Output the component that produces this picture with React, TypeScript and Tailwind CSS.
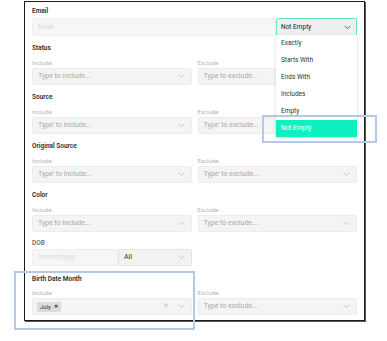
import React from "react";

const Chevron = ({ color = "#c4c4c4" }: { color?: string }) => (
  <svg width="7" height="5" viewBox="0 0 7 5" fill="none">
    <path d="M1 1.2L3.5 3.6L6 1.2" stroke={color} strokeWidth="0.9" strokeLinecap="round" strokeLinejoin="round" />
  </svg>
);

const SelectBox = ({ placeholder, children }: { placeholder?: string; children?: React.ReactNode }) => (
  <div className="h-[17px] flex items-center justify-between rounded-[2px] border border-[#ececec] bg-[#f4f4f4] pl-[5px] pr-[6px]">
    {children ?? <span className="text-[7px] text-[#a9a9a9] leading-none">{placeholder}</span>}
    <Chevron />
  </div>
);

const Field = ({ label, placeholder }: { label: string; placeholder: string }) => (
  <div className="flex flex-col">
    <div className="h-[9px] text-[6px] leading-[9px] text-[#b4b4b4]">{label}</div>
    <div className="mt-[1px]">
      <SelectBox placeholder={placeholder} />
    </div>
  </div>
);

const Section = ({ title, inc, exc }: { title: string; inc: string; exc: string }) => (
  <div className="mt-[7px]">
    <div className="h-[10px] text-[6.5px] leading-[10px] font-semibold text-[#2b2b2b]">{title}</div>
    <div className="mt-[5px] grid grid-cols-2 gap-x-[6px]">
      <Field label="Include:" placeholder={inc} />
      <Field label="Exclude:" placeholder={exc} />
    </div>
  </div>
);

const items = ["Exactly", "Starts With", "Ends With", "Includes", "Empty", "Not Empty"];

export default function App() {
  return (
    <div className="relative w-[387px] h-[341px] bg-white overflow-hidden" style={{ fontFamily: "Roboto, 'Liberation Sans', sans-serif" }}>
      <div className="ml-[24px] mt-[1px] w-[341px] h-[320px] border border-[#1c1c1c] shadow-[1px_1px_0_#555] px-[7px] pt-[4px]">
        {/* Email */}
        <div className="h-[10px] text-[6.5px] leading-[10px] font-semibold text-[#2b2b2b]">Email</div>
        <div className="mt-[2px] h-[18px] flex">
          <div className="flex-1 flex items-center rounded-l-[2px] border border-[#efefef] bg-[#f6f6f6] pl-[5px]">
            <span className="text-[6.5px] text-[#d6d6d6] leading-none">Email</span>
          </div>
          <div className="w-[81px] flex items-center justify-between border border-[#5fe9c5] bg-[#efefef] pl-[4px] pr-[5px] rounded-[2px]">
            <span className="text-[6.5px] text-[#222] leading-none">Not Empty</span>
            <Chevron color="#555" />
          </div>
        </div>

        <Section title="Status" inc="Type to include..." exc="Type to exclude..." />
        <Section title="Source" inc="Type' to include..." exc="Type' to exclude..." />
        <Section title="Original Source" inc="Type' to include..." exc="Type' to exclude..." />
        <Section title="Color" inc="Type to include..." exc="Type to exclude..." />

        {/* DOB */}
        <div className="mt-[6px]">
          <div className="h-[10px] text-[6.5px] leading-[10px] font-medium text-[#666]">DOB</div>
          <div className="mt-[1px] grid grid-cols-2 gap-x-[6px]">
            <div className="flex h-[17px]">
              <div className="w-[86px] flex items-center rounded-l-[2px] border border-[#efefef] bg-[#f6f6f6] pl-[6px]">
                <span className="text-[6.5px] text-[#d8d8d8] leading-none">mm/dd/yyyy</span>
              </div>
              <div className="flex-1 flex items-center justify-between rounded-r-[2px] border border-[#e6e6e6] bg-[#f2f2f2] pl-[5px] pr-[6px]">
                <span className="text-[7px] text-[#333] leading-none">All</span>
                <Chevron />
              </div>
            </div>
            <div />
          </div>
        </div>

        {/* Birth Date Month */}
        <div className="mt-[8px]">
          <div className="h-[10px] text-[6.5px] leading-[10px] font-semibold text-[#2b2b2b]">Birth Date Month</div>
          <div className="mt-[4px] grid grid-cols-2 gap-x-[6px]">
            <div className="flex flex-col">
              <div className="h-[9px] text-[6px] leading-[9px] text-[#b4b4b4]">Include:</div>
              <div className="mt-[1px] h-[17px] flex items-center justify-between rounded-[2px] border border-[#ececec] bg-[#f4f4f4] pl-[4px] pr-[6px]">
                <span className="flex items-center gap-[3px] h-[10px] rounded-[1px] bg-[#dcdcdc] px-[3px] text-[6px] leading-none text-[#333]">
                  July <span className="text-[5px] text-[#555]">✖</span>
                </span>
                <div className="flex items-center gap-[9px]">
                  <span className="text-[7px] leading-none text-[#c8c8c8]">✕</span>
                  <Chevron />
                </div>
              </div>
            </div>
            <Field label="Exclude:" placeholder="Type to exclude..." />
          </div>
        </div>
      </div>

      {/* Dropdown menu */}
      <div className="absolute left-[276px] top-[35px] w-[81px] bg-white shadow-[0_1px_3px_rgba(0,0,0,0.18)] flex flex-col">
        {items.map((it, i) => (
          <div
            key={it}
            className={
              i === items.length - 1
                ? "h-[17px] flex items-center pl-[5px] text-[6.5px] text-white bg-[#0ff0c0]"
                : "h-[17px] flex items-center pl-[5px] text-[6.5px] text-[#333]"
            }
          >
            {it}
          </div>
        ))}
      </div>

      {/* Highlight rectangles */}
      <div className="absolute left-[262px] top-[115px] w-[115px] h-[28px] border-[2px] border-[#b3c9e6]" />
      <div className="absolute left-[14px] top-[271px] w-[181px] h-[59px] border-[2px] border-[#b3c9e6]" />
    </div>
  );
}
